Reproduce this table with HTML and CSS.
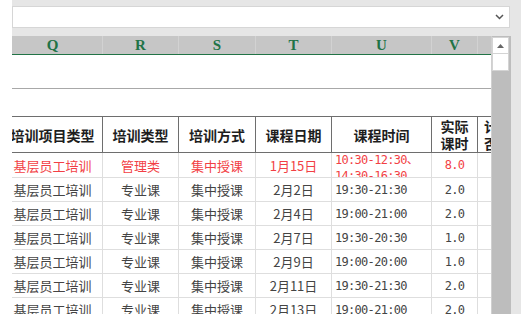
FILE: index.html
```html
<!DOCTYPE html>
<html lang="zh-CN">
<head>
    <meta charset="UTF-8">
    <meta name="viewport" content="width=device-width, initial-scale=1.0">
    <title>培训记录</title>
    <link rel="stylesheet" href="styles.css">
</head>
<body>
    <div class="app">
        <div class="formula-bar">
            <svg class="chevron" width="9" height="6" viewBox="0 0 9 6">
                <polyline points="1,1 4.5,4.5 8,1" fill="none" stroke="#555" stroke-width="1.5"/>
            </svg>
        </div>

        <div class="workspace">
            <div class="sheet">
                <div class="row letters">
                    <div class="cell">Q</div>
                    <div class="cell">R</div>
                    <div class="cell">S</div>
                    <div class="cell">T</div>
                    <div class="cell">U</div>
                    <div class="cell">V</div>
                    <div class="cell"></div>
                </div>
                <div class="row blank-a"></div>
                <div class="row blank-b"></div>
                <div class="row head">
                    <div class="cell">培训项目类型</div>
                    <div class="cell">培训类型</div>
                    <div class="cell">培训方式</div>
                    <div class="cell">课程日期</div>
                    <div class="cell">课程时间</div>
                    <div class="cell two-line">实际<br>课时</div>
                    <div class="cell two-line left">计划<br>否</div>
                </div>
                <div class="row data red">
                    <div class="cell">基层员工培训</div>
                    <div class="cell">管理类</div>
                    <div class="cell">集中授课</div>
                    <div class="cell">1月15日</div>
                    <div class="cell time multi"><div>10:30-12:30、<br>14:30-16:30</div></div>
                    <div class="cell num">8.0</div>
                    <div class="cell"></div>
                </div>
                <div class="row data">
                    <div class="cell">基层员工培训</div>
                    <div class="cell">专业课</div>
                    <div class="cell">集中授课</div>
                    <div class="cell">2月2日</div>
                    <div class="cell time">19:30-21:30</div>
                    <div class="cell num">2.0</div>
                    <div class="cell"></div>
                </div>
                <div class="row data">
                    <div class="cell">基层员工培训</div>
                    <div class="cell">专业课</div>
                    <div class="cell">集中授课</div>
                    <div class="cell">2月4日</div>
                    <div class="cell time">19:00-21:00</div>
                    <div class="cell num">2.0</div>
                    <div class="cell"></div>
                </div>
                <div class="row data">
                    <div class="cell">基层员工培训</div>
                    <div class="cell">专业课</div>
                    <div class="cell">集中授课</div>
                    <div class="cell">2月7日</div>
                    <div class="cell time">19:30-20:30</div>
                    <div class="cell num">1.0</div>
                    <div class="cell"></div>
                </div>
                <div class="row data">
                    <div class="cell">基层员工培训</div>
                    <div class="cell">专业课</div>
                    <div class="cell">集中授课</div>
                    <div class="cell">2月9日</div>
                    <div class="cell time">19:00-20:00</div>
                    <div class="cell num">1.0</div>
                    <div class="cell"></div>
                </div>
                <div class="row data">
                    <div class="cell">基层员工培训</div>
                    <div class="cell">专业课</div>
                    <div class="cell">集中授课</div>
                    <div class="cell">2月11日</div>
                    <div class="cell time">19:30-21:30</div>
                    <div class="cell num">2.0</div>
                    <div class="cell"></div>
                </div>
                <div class="row data">
                    <div class="cell">基层员工培训</div>
                    <div class="cell">专业课</div>
                    <div class="cell">集中授课</div>
                    <div class="cell">2月13日</div>
                    <div class="cell time">19:00-21:00</div>
                    <div class="cell num">2.0</div>
                    <div class="cell"></div>
                </div>
            </div>

            <div class="vscroll">
                <div class="scroll-btn">
                    <svg width="7" height="4" viewBox="0 0 7 4"><polygon points="0,4 3.5,0 7,4" fill="#666"/></svg>
                </div>
                <div class="scroll-thumb"></div>
            </div>
            <div class="edge"></div>
        </div>
    </div>
</body>
</html>
```

FILE: styles.css
```css
:root {
    --chrome: #e6e6e6;
    --header-bg: #c6c6c6;
    --excel-green: #217346;
    --grid-line: #dedede;
    --dark-line: #6e6e6e;
    --text: #444;
    --red: #f23f45;
}

body {
    margin: 0;
    padding-left: 12px;
    font-family: "Noto Sans CJK SC", "Noto Sans", sans-serif;
    background: #fff;
    overflow: hidden;
}

.app {
    height: 314px;
    background: var(--chrome);
    display: flex;
    flex-direction: column;
}

.formula-bar {
    margin: 6px 11px 0 0;
    height: 20px;
    background: #fff;
    border: 1px solid #d6d6d6;
    display: flex;
    align-items: center;
    justify-content: flex-end;
    padding-right: 5px;
}

.workspace {
    margin-top: 8px;
    flex: 1;
    min-height: 0;
    display: flex;
}

.sheet {
    width: 479px;
    overflow: hidden;
    background: #fff;
}

.row {
    display: grid;
    grid-template-columns: 100px 76px 77px 76px 100px 46px 60px;
    margin-left: -9px;
    box-sizing: border-box;
}

.cell {
    box-sizing: border-box;
    display: flex;
    align-items: center;
    justify-content: center;
    white-space: nowrap;
    overflow: hidden;
}

/* column letters */
.letters {
    height: 19px;
    background: var(--header-bg);
    border-bottom: 1px solid var(--excel-green);
}

.letters .cell {
    border-right: 1px solid #d2d2d2;
    font-family: "Liberation Serif", serif;
    font-weight: bold;
    font-size: 15px;
    padding-top: 1px;
    color: var(--excel-green);
}

.blank-a {
    height: 34px;
    border-bottom: 1px solid #a8a8a8;
}

.blank-b {
    height: 28px;
    border-bottom: 1px solid var(--dark-line);
}

/* table title row */
.head {
    height: 36px;
    border-bottom: 1px solid var(--dark-line);
}

.head .cell {
    border-right: 1px solid var(--dark-line);
    font-size: 14px;
    font-weight: bold;
    color: #1e1e1e;
}

.head .two-line {
    line-height: 17px;
    text-align: center;
    white-space: normal;
}

.head .left {
    justify-content: flex-start;
    padding-left: 6px;
    text-align: left;
}

.data {
    height: 24px;
    border-bottom: 1px solid var(--grid-line);
    font-size: 13px;
    color: var(--text);
}

.data .cell {
    border-right: 1px solid var(--grid-line);
}

.data.red {
    height: 25px;
    color: var(--red);
}

.time,
.num {
    font-family: "DejaVu Sans Mono", "Noto Sans CJK SC", monospace;
    font-size: 12px;
    letter-spacing: -0.7px;
}

.time {
    justify-content: flex-start;
    padding-left: 3px;
}

.time.multi {
    align-items: flex-start;
}

.time.multi div {
    line-height: 16px;
    margin-top: -1px;
}

/* vertical scrollbar */
.vscroll {
    width: 20px;
    background: #bdbdbd;
    border-left: 1px solid #d0d0d0;
    box-sizing: border-box;
}

.scroll-btn {
    height: 17px;
    width: 17px;
    margin-top: 1px;
    background: #fff;
    border: 1px solid #d4d4d4;
    box-sizing: border-box;
    display: flex;
    align-items: center;
    justify-content: center;
}

.scroll-thumb {
    height: 17px;
    width: 17px;
    background: #fff;
    border: 1px solid #d4d4d4;
    border-top: none;
    box-sizing: border-box;
}

.edge {
    width: 10px;
}
```
